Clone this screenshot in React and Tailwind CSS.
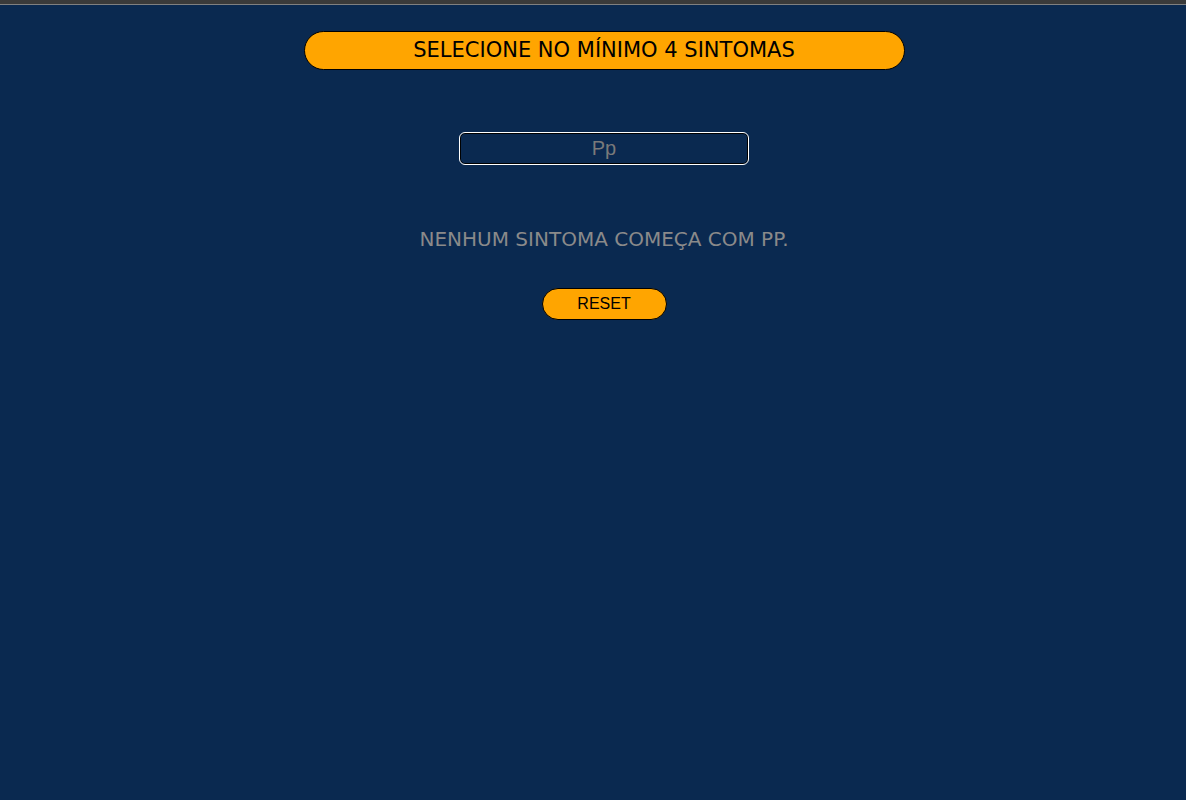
import { useState } from 'react';

export default function App() {
  const [query, setQuery] = useState('Pp');

  return (
    <div className="min-h-screen bg-[#0a2950] flex flex-col">
      {/* browser-ish top strip */}
      <div className="h-[4px] bg-[#3a3a3a]" />
      <div className="h-[1px] bg-[#808080]" />

      <div className="flex flex-col items-center pt-[26px] pl-[22px]">
        <div
          className="w-[601px] h-[39px] rounded-full border border-black bg-[#ffa500] flex items-center justify-center text-[21px] text-black"
          style={{ fontFamily: '"DejaVu Sans", Verdana, sans-serif' }}
        >
          SELECIONE NO MÍNIMO 4 SINTOMAS
        </div>

        <div className="mt-[62px] w-[290px] h-[33px] rounded-[6px] border border-white bg-[#0a2950] shadow-[inset_0_0_0_1px_#000]">
          <input
            autoFocus
            value={query}
            onChange={(e) => setQuery(e.target.value)}
            className="w-full h-full bg-transparent text-center text-[20px] text-[#7a7a7a] outline-none caret-white"
            style={{ fontFamily: '"Liberation Sans", Arial, sans-serif' }}
          />
        </div>

        <p
          className="mt-[60px] text-[20px] leading-[28px] text-[#8a8a8a]"
          style={{ fontFamily: '"DejaVu Sans", Verdana, sans-serif' }}
        >
          NENHUM SINTOMA COMEÇA COM {query.toUpperCase()}.
        </p>

        <button
          onClick={() => setQuery('')}
          className="mt-[35px] w-[125px] h-[32px] rounded-full border border-black bg-[#ffa500] text-[16px] text-black"
          style={{ fontFamily: '"Liberation Sans", Arial, sans-serif' }}
        >
          RESET
        </button>
      </div>
    </div>
  );
}
